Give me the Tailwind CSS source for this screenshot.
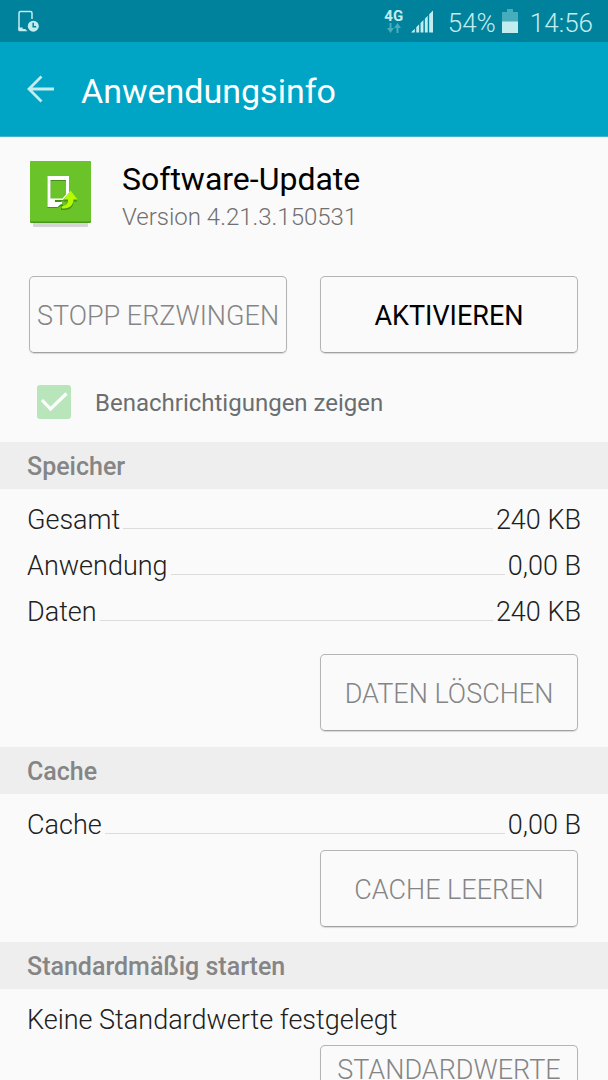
<!DOCTYPE html>
<html lang="de">
<head>
<meta charset="utf-8">
<meta name="viewport" content="width=device-width, initial-scale=1">
<title>Anwendungsinfo</title>
<script src="https://cdn.jsdelivr.net/npm/@tailwindcss/browser@4"></script>
</head>
<body class="flex h-screen flex-col overflow-hidden bg-[#fafafa] font-['Roboto','Noto_Sans',sans-serif] text-[#202020]">

<!-- Status bar -->
<div class="flex h-[42px] shrink-0 items-center bg-[#00829c] pr-[15px] pl-[17px] text-[#c3ecef]">
  <svg class="h-6 w-6" viewBox="0 0 24 24" fill="none" aria-hidden="true">
    <path d="M15 10V4a1.500 1.500 0 0 0-1.500-1.500h-10A1.500 1.500 0 0 0 2 4v16M15 10V8" stroke="currentColor" stroke-width="1.500"/>
    <path d="M1.200 18.500h4.500v1.500h3v1.200h1.500v1H2.500a1.300 1.300 0 0 1-1.300-1.300z" fill="currentColor"/>
    <circle cx="16.300" cy="17.200" r="5.500" fill="currentColor"/>
    <path d="M16.200 13.800v4h3" stroke="#00829c" stroke-width="1.500"/>
  </svg>
  <div class="ml-auto flex w-5 flex-col items-center">
    <span class="text-[15px] leading-[14px] font-bold">4G</span>
    <svg class="h-[11px] w-4" viewBox="0 0 16 11" fill="#47adbd" aria-hidden="true">
      <path d="M3.500 0h2v5H8L4.500 10 1 5h2.500zM10.500 10h2V5H15L11.500 0 8 5h2.500z"/>
    </svg>
  </div>
  <svg class="ml-[7px] h-[23px] w-[22px]" viewBox="0 0 23 23" fill="currentColor" aria-hidden="true">
    <path d="M0 23l4-4v4zM5.500 17.500l3-3V23h-3zM10 13l3-3v13h-3zM14.500 8.500l3-3V23h-3zM19 4l4-4v23h-4z"/>
  </svg>
  <span class="ml-[15px] pt-[3px] text-[26px] leading-8 font-light">54%</span>
  <svg class="ml-[6px] h-6 w-4" viewBox="0 0 16 24" aria-hidden="true">
    <path d="M0 3h5V0h6v3h5v10H0z" fill="#47adbd"/>
    <path d="M0 12.500h16V24H0z" fill="currentColor"/>
  </svg>
  <span class="ml-[12px] pt-[3px] text-[26px] leading-8 font-light">14:56</span>
</div>

<!-- Title bar -->
<header class="flex h-[95px] shrink-0 items-center border-b border-[#45b4ca] bg-[#00a5c6] pl-[27px]">
  <button type="button" aria-label="Zurück" class="text-[#c3ecef]">
    <svg class="h-7 w-7" viewBox="0 0 28 28" fill="none" stroke="currentColor" stroke-width="2.800" aria-hidden="true">
      <path d="M27 14H2.500M14.500 1.500L2 14l12.500 12.500"/>
    </svg>
  </button>
  <h1 class="ml-[26px] pt-1 text-[34px] leading-10 text-white">Anwendungsinfo</h1>
</header>

<main class="min-h-0 flex-1 overflow-hidden">
  <!-- App summary -->
  <section class="flex items-start px-[30px] pt-6">
    <svg class="h-[66px] w-[61px] shrink-0" viewBox="0 0 61 66" aria-hidden="true">
      <path d="M3 60h55v5a1 1 0 0 1-1 1H4a1 1 0 0 1-1-1z" fill="#d5d5d5"/>
      <rect width="61" height="62" rx="1.500" fill="#48961b"/>
      <rect width="61" height="60.500" rx="1.500" fill="#6ac328"/>
      <g fill="#45901d" transform="translate(0 1)">
        <path fill-rule="evenodd" d="M17.500 15h21.500v18l-6 6h-2v2h-6v1.500h8v2h-3L27 46h-9.500zM20.500 19v18h14l2-3V19z"/>
        <path d="M40.500 30l7 9.500h-4c0 5-3.500 8.500-9.500 8.500h-3v-2c4-1 6-3 6-6.500h-3.500z"/>
      </g>
      <path fill="#fff" fill-rule="evenodd" d="M17.500 15h21.500v17l-6 7h-8v2h7v2h-1l-3.500 3H17.500zM20.500 19v18.500h12l3.500-4V19z"/>
      <path fill="#b5fb00" d="M40.500 29.500l7 9h-4c0 5-3.500 9-9.500 9h-2v-2c4-1 6-3 6-7h-4z"/>
    </svg>
    <div class="ml-[31px]">
      <h2 class="text-[32px] leading-9 text-black">Software-Update</h2>
      <p class="pt-1 text-[24px] leading-8 font-light text-[#707070]">Version 4.21.3.150531</p>
    </div>
  </section>

  <div class="grid grid-cols-2 gap-[33px] pt-[43px] pr-[30px] pl-[29px]">
    <button type="button" disabled class="h-[77px] rounded-[5px] border border-[#b4b4b4] border-b-[#a0a0a0] pt-[2px] text-[27px] leading-8 font-light whitespace-nowrap text-[#858585] shadow-[0_1px_1px_#0002]">STOPP ERZWINGEN</button>
    <button type="button" class="h-[77px] rounded-[5px] border border-[#b4b4b4] border-b-[#a0a0a0] pt-[2px] text-[27px] leading-8 whitespace-nowrap text-black shadow-[0_1px_1px_#0002]">AKTIVIEREN</button>
  </div>

  <label class="flex h-[89px] items-center pt-[8px] pl-[37px]">
    <span class="grid h-[34px] w-[34px]">
      <input type="checkbox" checked disabled class="col-start-1 row-start-1 h-[34px] w-[34px] appearance-none rounded-[3px] bg-[#b9e5ba]">
      <svg class="col-start-1 row-start-1 h-[34px] w-[34px]" viewBox="0 0 34 34" fill="none" stroke="#fff" stroke-width="3.200" aria-hidden="true">
        <path d="M5 15l8.500 9L29.500 8.500"/>
      </svg>
    </span>
    <span class="ml-6 pt-[2px] text-[24px] leading-8 text-[#6b6e70]">Benachrichtigungen zeigen</span>
  </label>

  <!-- Storage -->
  <section>
    <h3 class="flex h-[47px] items-center bg-[#eeeeee] pt-[3px] pl-[27px] text-[25px] leading-8 font-medium text-[#858585]">Speicher</h3>
    <dl class="px-[27px] pt-2 text-[27px] leading-[46px] font-light">
      <div class="flex">
        <dt>Gesamt</dt>
        <span class="mx-[3px] mb-[14px] flex-1 border-b border-[#dcdcdc]"></span>
        <dd>240 KB</dd>
      </div>
      <div class="flex">
        <dt>Anwendung</dt>
        <span class="mx-[3px] mb-[14px] flex-1 border-b border-[#dcdcdc]"></span>
        <dd>0,00 B</dd>
      </div>
      <div class="flex">
        <dt>Daten</dt>
        <span class="mx-[3px] mb-[14px] flex-1 border-b border-[#dcdcdc]"></span>
        <dd>240 KB</dd>
      </div>
    </dl>
    <div class="grid grid-cols-2 gap-[33px] pt-[19px] pr-[30px] pb-4 pl-[29px]">
      <button type="button" disabled class="col-start-2 h-[77px] rounded-[5px] border border-[#b4b4b4] border-b-[#a0a0a0] pt-[2px] text-[27px] leading-8 font-light whitespace-nowrap text-[#858585] shadow-[0_1px_1px_#0002]">DATEN LÖSCHEN</button>
    </div>
  </section>

  <!-- Cache -->
  <section>
    <h3 class="flex h-[47px] items-center bg-[#eeeeee] pt-[3px] pl-[27px] text-[25px] leading-8 font-medium text-[#858585]">Cache</h3>
    <dl class="px-[27px] pt-2 text-[27px] leading-[46px] font-light">
      <div class="flex">
        <dt>Cache</dt>
        <span class="mx-[3px] mb-[14px] flex-1 border-b border-[#dcdcdc]"></span>
        <dd>0,00 B</dd>
      </div>
    </dl>
    <div class="grid grid-cols-2 gap-[33px] pt-[2px] pr-[30px] pb-[15px] pl-[29px]">
      <button type="button" disabled class="col-start-2 h-[77px] rounded-[5px] border border-[#b4b4b4] border-b-[#a0a0a0] pt-[2px] text-[27px] leading-8 font-light whitespace-nowrap text-[#858585] shadow-[0_1px_1px_#0002]">CACHE LEEREN</button>
    </div>
  </section>

  <!-- Defaults -->
  <section>
    <h3 class="flex h-[47px] items-center bg-[#eeeeee] pt-[3px] pl-[27px] text-[25px] leading-8 font-medium text-[#858585]">Standardmäßig starten</h3>
    <p class="px-[27px] pt-2 text-[27px] leading-[46px] font-light">Keine Standardwerte festgelegt</p>
    <div class="grid grid-cols-2 gap-[33px] pt-[2px] pr-[30px] pl-[29px]">
      <button type="button" disabled class="col-start-2 flex h-[77px] items-start justify-center rounded-[5px] border border-[#b4b4b4] border-b-[#a0a0a0] pt-2 text-[27px] leading-8 font-light whitespace-nowrap text-[#858585] shadow-[0_1px_1px_#0002]">STANDARDWERTE</button>
    </div>
  </section>
</main>
</body>
</html>
